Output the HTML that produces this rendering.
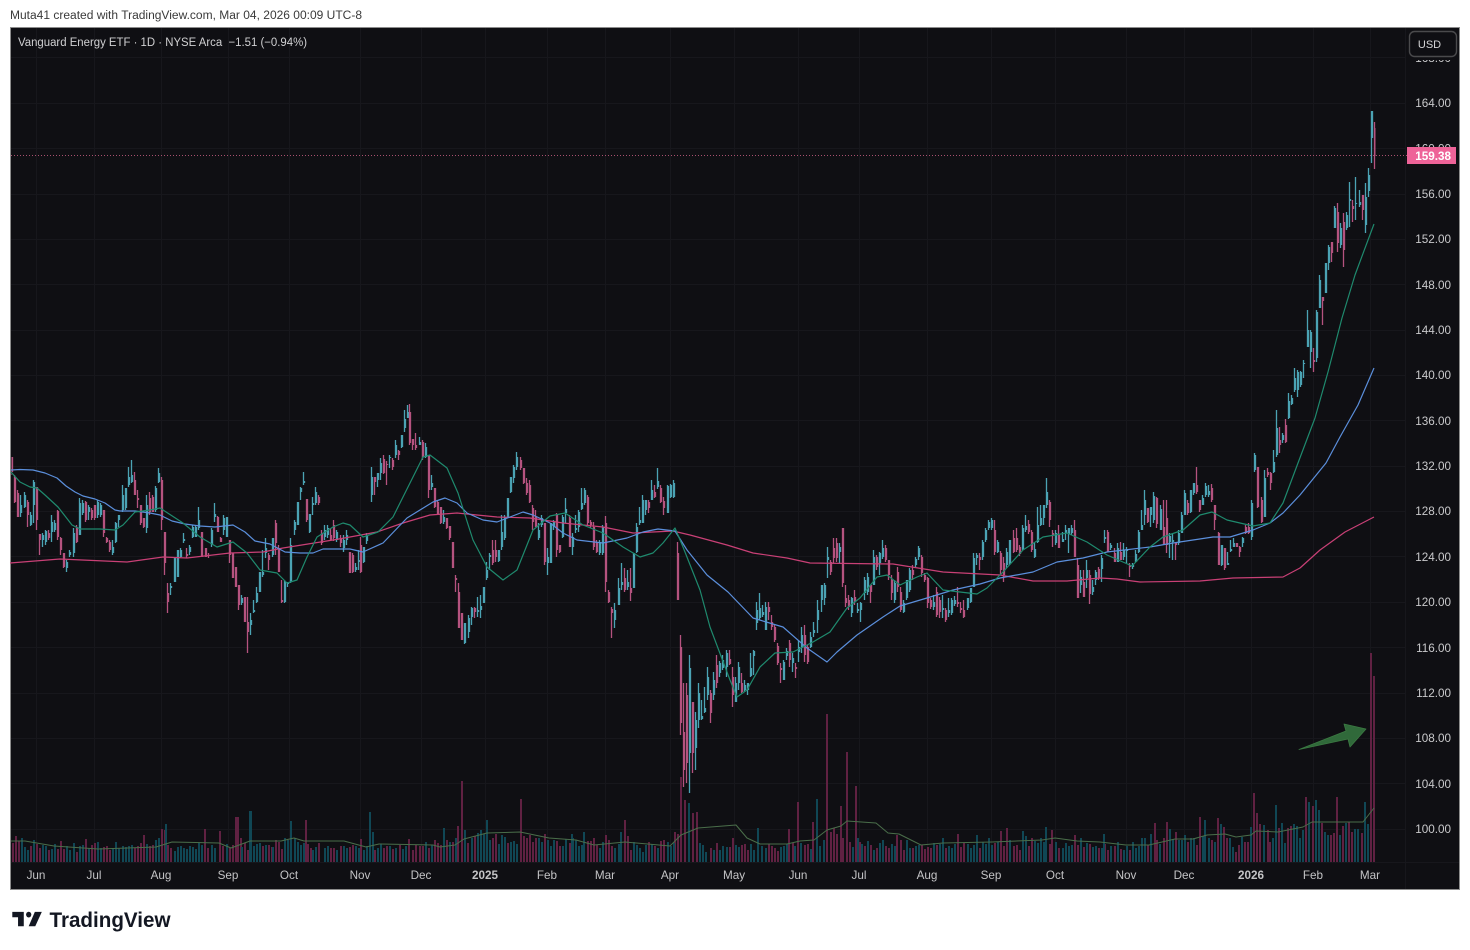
<!DOCTYPE html>
<html><head><meta charset="utf-8"><title>VDE</title>
<style>
html,body{margin:0;padding:0;background:#fff;width:1470px;height:950px;overflow:hidden}
svg{display:block;font-family:"Liberation Sans",sans-serif}
.u{stroke:#4ba3b4;stroke-width:1.3;fill:none}
.d{stroke:#b5527f;stroke-width:1.3;fill:none}
.vt{stroke:#104755;stroke-width:2;fill:none}
.vp{stroke:#602142;stroke-width:2;fill:none}
.p{font-size:11.7px;fill:#c9c9cb;text-anchor:end}
.t{font-size:11.7px;fill:#c4c4c6;text-anchor:middle}
.g{stroke:#17171c;stroke-width:1;fill:none}
.m{fill:none;stroke-width:1.2;stroke-linejoin:round}
</style></head><body>
<svg width="1470" height="950" viewBox="0 0 1470 950" xmlns="http://www.w3.org/2000/svg">
<defs><filter id="s" x="0" y="0" width="1" height="1" filterUnits="objectBoundingBox"><feGaussianBlur stdDeviation=".3"/></filter></defs>
<rect width="1470" height="950" fill="#fff"/>
<text x="10" y="19" font-size="11.5" fill="#3a3a3a" textLength="352" lengthAdjust="spacingAndGlyphs">Muta41 created with TradingView.com, Mar 04, 2026 00:09 UTC-8</text>
<rect x="10.5" y="27.5" width="1449" height="862" fill="#0f0f13" stroke="#8c8c8c"/>
<path class="g" d="M11 57.5H1405M11 103.5H1405M11 148.5H1405M11 194.5H1405M11 239.5H1405M11 284.5H1405M11 330.5H1405M11 375.5H1405M11 420.5H1405M11 466.5H1405M11 511.5H1405M11 556.5H1405M11 602.5H1405M11 647.5H1405M11 693.5H1405M11 738.5H1405M11 783.5H1405M11 829.5H1405"/>
<path class="g" d="M36.5 28V862M94.5 28V862M161.5 28V862M228.5 28V862M289.5 28V862M360.5 28V862M421.5 28V862M485.5 28V862M547.5 28V862M605.5 28V862M670.5 28V862M734.5 28V862M798.5 28V862M859.5 28V862M927.5 28V862M991.5 28V862M1055.5 28V862M1126.5 28V862M1184.5 28V862M1251.5 28V862M1313.5 28V862M1370.5 28V862M1405.5 28V889M11 862.5H1459"/>

<!-- volume -->
<path class="vp" d="M13 843V862M16 836V862M19 841V862M31 846V862M37 844V862M40 848V862M49 850V862M58 849V862M61 841V862M64 849V862M77 852V862M86 839V862M92 845V862M95 843V862M104 847V862M107 846V862M110 850V862M135 848V862M138 846V862M141 843V862M144 835V862M150 846V862M153 845V862M162 829V862M165 830V862M168 845V862M171 848V862M205 829V862M208 848V862M220 831V862M223 846V862M230 848V862M233 845V862M236 817V862M238 817V862M241 838V862M245 843V862M248 850V862M263 846V862M269 845V862M272 847V862M276 840V862M279 842V862M282 849V862M306 820V862M308 844V862M311 848V862M319 843V862M331 848V862M334 848V862M341 846V862M350 847V862M353 845V862M361 839V862M375 850V862M384 848V862M387 846V862M393 849V862M400 845V862M409 839V862M413 850V862M416 845V862M420 846V862M423 846V862M429 848V862M435 840V862M438 843V862M441 845V862M447 840V862M453 842V862M458 826V862M462 781V862M468 843V862M475 836V862M493 838V862M496 834V862M508 843V862M521 799V862M524 836V862M527 838V862M530 835V862M533 842V862M536 838V862M545 834V862M557 841V862M560 846V862M570 843V862M588 841V862M591 841V862M594 838V862M597 845V862M606 835V862M609 840V862M612 846V862M625 820V862M628 836V862M631 850V862M649 842V862M655 846V862M661 841V862M664 840V862M675 832V862M678 834V862M681 777V862M685 800V862M693 813V862M697 812V862"/>
<path class="vp" d="M711 848V862M717 843V862M730 847V862M733 838V862M742 845V862M745 844V862M748 850V862M769 844V862M772 846V862M775 848V862M778 851V862M789 829V862M793 843V862M798 802V862M805 845V862M808 844V862M813 822V862M827 714V862M831 832V862M834 828V862M837 834V862M841 806V862M843 838V862M847 752V862M850 842V862M856 786V862M860 842V862M865 846V862M871 845V862M877 848V862M886 846V862M889 848V862M897 835V862M901 840V862M904 850V862M913 848V862M922 845V862M925 849V862M928 847V862M931 848V862M937 845V862M946 848V862M958 834V862M961 847V862M964 843V862M980 848V862M995 843V862M1001 831V862M1004 846V862M1007 828V862M1014 846V862M1017 845V862M1020 850V862M1029 846V862M1032 838V862M1050 844V862M1052 830V862M1059 848V862M1075 835V862M1078 845V862M1084 847V862M1090 844V862M1099 848V862M1105 844V862M1108 850V862M1115 846V862M1121 849V862M1130 850V862M1148 845V862M1155 823V862M1157 840V862M1164 838V862M1167 822V862M1176 832V862M1188 842V862M1197 845V862M1200 817V862M1212 840V862"/>
<path class="vp" d="M1218 818V862M1224 827V862M1227 838V862M1236 852V862M1239 845V862M1245 842V862M1248 842V862M1254 793V862M1257 813V862M1260 824V862M1268 830V862M1270 842V862M1279 828V862M1291 826V862M1288 828V862M1306 797V862M1313 806V862M1322 823V862M1331 835V862M1334 833V862M1337 797V862M1343 826V862M1349 822V862M1352 832V862M1362 833V862M1371 653V862M1374 676V862"/>
<path class="vt" d="M22 838V862M25 847V862M28 850V862M34 840V862M43 845V862M46 846V862M52 849V862M55 844V862M67 846V862M70 850V862M74 843V862M80 846V862M83 845V862M89 848V862M98 842V862M101 848V862M113 848V862M116 842V862M119 848V862M123 846V862M126 847V862M129 846V862M132 845V862M147 844V862M156 840V862M159 838V862M166 824V862M175 851V862M178 847V862M181 846V862M184 848V862M187 849V862M190 846V862M193 847V862M196 849V862M199 843V862M202 845V862M212 845V862M215 848V862M227 844V862M242 847V862M250 811V862M251 811V862M254 846V862M257 844V862M260 843V862M266 845V862M273 847V862M285 838V862M288 840V862M291 821V862M295 838V862M298 842V862M301 845V862M304 843V862M313 850V862M316 847V862M325 848V862M328 846V862M337 850V862M344 846V862M347 848V862M356 846V862M359 848V862M364 850V862M367 846V862M370 812V862M373 832V862M378 848V862M381 844V862M390 846V862M396 848V862M403 849V862M406 846V862"/>
<path class="vt" d="M426 842V862M432 845V862M444 828V862M450 842V862M456 838V862M465 830V862M472 838V862M478 833V862M481 830V862M484 834V862M487 820V862M490 840V862M499 844V862M502 835V862M505 837V862M511 842V862M514 841V862M517 844V862M539 838V862M542 842V862M548 840V862M551 846V862M554 840V862M563 846V862M566 839V862M572 834V862M573 838V862M576 840V862M579 846V862M582 845V862M584 832V862M600 848V862M603 842V862M615 848V862M619 844V862M621 832V862M634 842V862M637 845V862M640 848V862M643 852V862M646 845V862M652 844V862M658 848V862M668 842V862M671 846V862M674 843V862M689 803V862M700 843V862M703 845V862M706 852V862M714 850V862M720 850V862M723 846V862M727 847V862M736 845V862M739 847V862M751 844V862M754 850V862M758 828V862M762 846V862M766 848V862M781 847V862M784 846V862M787 844V862M795 846V862M801 843V862M811 849V862M817 799V862M820 846V862M824 840V862M853 847V862M858 838V862M862 844V862M868 841V862M874 850V862M880 843V862M883 840V862M892 844V862M895 846V862M907 840V862M910 848V862M916 846V862M919 845V862M934 843V862M940 844V862M943 838V862M949 846V862M952 848V862M955 844V862M968 844V862M971 848V862M974 845V862M977 835V862M983 842V862M986 844V862M989 838V862M992 845V862M998 842V862M1010 840V862M1023 831V862M1026 836V862M1035 841V862M1038 843V862M1041 838V862M1044 842V862M1046 827V862M1056 842V862M1063 848V862M1066 843V862M1069 846V862M1072 845V862M1081 838V862M1087 843V862M1093 847V862M1096 846V862M1102 848V862M1104 834V862M1111 846V862M1118 842V862M1124 850V862M1127 846V862M1133 842V862M1136 848V862M1139 846V862M1142 838V862M1145 838V862M1151 834V862M1160 844V862M1170 829V862M1173 839V862M1179 840V862M1182 840V862M1185 835V862M1191 838V862M1194 838V862M1203 836V862M1205 820V862M1209 838V862M1215 842V862M1221 824V862M1230 838V862M1233 847V862M1242 837V862M1251 827V862M1264 825V862M1273 838V862M1276 805V862M1282 823V862M1285 843V862M1294 824V862M1297 826V862M1300 838V862M1303 830V862M1309 802V862M1316 800V862M1319 810V862M1325 832V862M1328 835V862M1340 835V862M1346 823V862M1355 829V862M1358 829V862M1365 802V862M1368 824V862"/>
<polyline class="m" stroke="#4a6e4a" stroke-width="1" points="11,841 25,841 54,846 98,849 156,847 172,842 219,843 231,848 250,841 281,841 294,838 304,841 344,841 366,847 379,844 433,845 440,847 455,845 464,839 487,833 520,832 525,833 549,838 576,840 594,845 625,842 670,846 681,835 698,828 736,825 747,838 760,844 787,844 800,841 814,840 827,830 841,826 847,821 876,823 888,833 899,834 921,845 943,843 992,842 1042,840 1055,838 1077,841 1100,842 1126,845 1149,845 1175,839 1193,839 1207,835 1225,834 1236,837 1251,835 1256,831 1278,832 1303,827 1312,822 1363,822 1374,808" style="stroke-width:1"/>

<!-- candles -->
<g transform="translate(.5,0)" filter="url(#s)">
<path class="d" d="M11 457V475M12 457V472M14 475V503M15 477V502M17 490V517M18 493V517"/>
<path class="u" d="M20 495V517M21 505V513M24 492V508M25 495V507"/>
<path class="d" d="M27 500V527M28 502V515"/>
<path class="u" d="M30 512V526M31 515V525M33 480V523M34 482V505"/>
<path class="d" d="M36 487V530M37 487V520M39 534V555M40 534V540"/>
<path class="u" d="M42 533V547M43 535V540M45 530V545M46 531V542"/>
<path class="d" d="M48 530V540M49 533V538"/>
<path class="u" d="M51 515V542M52 522V532M54 520V532M55 523V530"/>
<path class="d" d="M57 510V540M58 511V537M60 537V555M61 538V550M63 553V568M64 553V567"/>
<path class="u" d="M66 560V572M67 562V568M69 550V557M70 552V555M73 528V557M74 533V553"/>
<path class="d" d="M76 525V543M77 527V542"/>
<path class="u" d="M79 498V535M80 503V535M82 500V515M83 503V513"/>
<path class="d" d="M85 501V522M86 502V520"/>
<path class="u" d="M88 505V520M89 507V512"/>
<path class="d" d="M91 508V520M92 510V518M94 505V520M95 505V518"/>
<path class="u" d="M97 500V518M98 502V515M100 503V517M101 505V515"/>
<path class="d" d="M103 510V537M104 510V533M106 537V543M107 538V542M109 540V552M110 542V550"/>
<path class="u" d="M112 540V555M113 547V553M115 522V543M116 523V542M118 515V527M119 515V520M122 485V512M123 495V510M125 488V510M126 488V508M128 467V487M129 477V485M131 460V483M132 475V482"/>
<path class="d" d="M134 472V495M135 480V495M137 490V508M138 498V500M140 505V525M141 505V523M143 518V528M144 518V527"/>
<path class="u" d="M146 495V533M147 505V528"/>
<path class="d" d="M149 492V515M150 498V512M152 495V512M153 497V512"/>
<path class="u" d="M155 486V512M156 488V510M158 468V483M159 473V482"/>
<path class="d" d="M161 477V530M162 480V520M164 532V575M165 532V563M167 583V613M168 593V602"/>
<path class="u" d="M170 583V595M171 586V588M174 557V582M175 558V582M177 550V577M178 550V577M180 548V558M181 550V557M183 533V543M184 539V541"/>
<path class="d" d="M186 548V558M187 554V556"/>
<path class="u" d="M189 545V555M190 547V552M192 525V538M193 527V537M195 525V537M196 527V537M198 507V530M199 520V528"/>
<path class="d" d="M201 532V557M202 532V557M205 548V557M206 548V557M208 553V558M209 555V556"/>
<path class="u" d="M211 528V547M212 530V545M214 503V522M215 514V517"/>
<path class="d" d="M217 516V532M218 517V532M220 537V542M221 538V542"/>
<path class="u" d="M223 515V535M224 518V530M226 517V537M227 517V537"/>
<path class="d" d="M229 540V563M230 540V555M232 553V578M233 553V578M235 567V587M236 567V587M238 585V610M239 585V605"/>
<path class="u" d="M241 595V605M242 598V603"/>
<path class="d" d="M244 597V622M245 597V622M247 597V653M248 622V632"/>
<path class="u" d="M250 613V635M251 620V625M253 600V613M254 610V612M256 587V603M257 593V602M259 572V592M260 572V592M262 550V577M263 572V575M265 538V558M266 548V553"/>
<path class="d" d="M268 553V570M269 555V560"/>
<path class="u" d="M272 538V557M273 538V555"/>
<path class="d" d="M275 520V555M276 523V543M278 545V572M279 548V572M281 580V603M282 600V602"/>
<path class="u" d="M284 580V603M285 582V602M287 582V587M288 582V584M290 538V583M291 545V582M294 520V535M295 522V530M297 502V525M298 502V525M300 487V500M301 488V492M303 472V485M304 481V483"/>
<path class="d" d="M306 499V522M307 499V520"/>
<path class="u" d="M309 514V533M310 514V532M312 497V515M313 503V505M315 487V505M316 492V503"/>
<path class="d" d="M318 495V505M319 497V503M321 530V545M322 533V543"/>
<path class="u" d="M324 525V540M325 530V537M327 525V538M328 528V535"/>
<path class="d" d="M330 528V540M331 535V540M333 520V541M334 525V538"/>
<path class="u" d="M336 530V542M337 532V540"/>
<path class="d" d="M340 535V547M341 538V543"/>
<path class="u" d="M343 535V552M344 540V548M346 530V545M347 535V540"/>
<path class="d" d="M349 552V573M350 552V573M352 553V573M353 555V572"/>
<path class="u" d="M355 563V572M356 567V570M358 550V570M359 560V562"/>
<path class="d" d="M360 537V573M361 545V572"/>
<path class="u" d="M363 547V563M364 547V562M366 533V544M367 535V541M371 467V502M372 477V495"/>
<path class="d" d="M374 477V495M375 477V482"/>
<path class="u" d="M377 473V487M378 473V480M380 458V480M381 463V473"/>
<path class="d" d="M383 455V474M384 459V473M386 461V485M387 464V465"/>
<path class="u" d="M389 455V468M390 457V458"/>
<path class="d" d="M392 458V470M393 460V467"/>
<path class="u" d="M395 440V458M396 445V455"/>
<path class="d" d="M398 450V460M399 451V455"/>
<path class="u" d="M401 435V448M402 435V447M404 410V432M405 419V428M407 405V418M408 412V418"/>
<path class="d" d="M409 404V445M410 412V443M412 439V450M413 439V445M415 433V450M416 445V448"/>
<path class="u" d="M419 437V445M420 442V445"/>
<path class="d" d="M422 440V460M423 442V457"/>
<path class="u" d="M425 443V458M426 447V457"/>
<path class="d" d="M428 455V498M429 455V490"/>
<path class="u" d="M431 475V490M432 483V487"/>
<path class="d" d="M434 488V508M435 488V507M437 500V515M438 502V515M440 507V524M441 507V523"/>
<path class="u" d="M443 510V524M444 517V522"/>
<path class="d" d="M446 518V529M447 518V528M449 526V540M450 526V538M452 542V568M453 542V568M455 575V592M456 578V580M458 583V628M459 592V628M461 613V640M462 613V640"/>
<path class="u" d="M464 623V644M465 623V643M468 615V638M469 618V632M471 607V625M472 608V617"/>
<path class="d" d="M474 607V618M475 608V612"/>
<path class="u" d="M477 597V617M478 610V612M480 595V618M481 606V610M483 587V603M484 587V603M486 562V580M487 570V578M489 553V570M490 555V557"/>
<path class="d" d="M492 540V565M493 550V563M495 540V562M496 550V557"/>
<path class="u" d="M498 550V562M499 550V561M501 515V550M502 532V547M504 515V540M505 517V538M507 498V518M508 498V518M510 477V493M511 477V492M513 465V483M514 467V478M516 452V470M517 457V467"/>
<path class="d" d="M520 457V470M521 460V468M523 468V484M524 468V483M526 478V495M527 483V493M529 480V503M530 485V502M532 505V530M533 508V522M535 510V527M536 517V527"/>
<path class="u" d="M538 523V540M539 530V538M541 515V527M542 518V525"/>
<path class="d" d="M544 523V565M545 523V562"/>
<path class="u" d="M547 548V575M548 557V563M550 523V563M551 523V563M553 520V530M554 522V527"/>
<path class="d" d="M556 513V557M557 514V550M559 545V553M560 545V552"/>
<path class="u" d="M562 515V538M563 517V537M565 498V523M566 509V513"/>
<path class="d" d="M569 515V547M570 518V547"/>
<path class="u" d="M572 533V555M573 537V547M575 515V533M576 528V530M578 510V532M579 512V527M581 488V510M582 503V509M584 488V505M585 490V503"/>
<path class="d" d="M587 495V525M588 497V523M590 520V528M591 522V525M593 522V550M594 527V547M596 540V553M597 542V552"/>
<path class="u" d="M599 540V555M600 542V553M602 525V555M603 527V553"/>
<path class="d" d="M605 516V592M606 523V582M608 590V603M609 592V602M611 607V638M612 609V613"/>
<path class="u" d="M614 603V628M615 610V620M618 578V605M619 588V605M621 563V590M622 582V585"/>
<path class="d" d="M624 568V592M625 578V590"/>
<path class="u" d="M627 570V590M628 582V587"/>
<path class="d" d="M630 568V601M631 588V593"/>
<path class="u" d="M633 553V588M634 553V588M636 523V553M637 527V552M639 507V525M640 520V523M642 495V523M643 500V523M645 500V515M646 500V510"/>
<path class="d" d="M648 500V513M649 502V508"/>
<path class="u" d="M651 480V500M652 490V500"/>
<path class="d" d="M654 485V498M655 492V497"/>
<path class="u" d="M657 468V489M658 481V487"/>
<path class="d" d="M660 485V503M661 488V502M663 497V515M664 501V508"/>
<path class="u" d="M667 485V513M668 486V513M670 484V498M671 485V497M673 480V498M674 483V497"/>
<path class="d" d="M677 542V600M678 553V600M680 635V735M681 647V723M683 683V787M684 732V770M686 683V783M687 695V763"/>
<path class="u" d="M689 655V793M690 668V753"/>
<path class="d" d="M692 702V773M693 702V753"/>
<path class="u" d="M695 712V770M696 720V748M698 683V728M699 693V720M701 700V720M702 716V719M704 687V713M705 708V712M707 667V700M708 677V695"/>
<path class="d" d="M710 690V723M711 693V713"/>
<path class="u" d="M713 672V700M714 680V695"/>
<path class="d" d="M716 655V688M717 665V683"/>
<path class="u" d="M719 661V677M720 663V673M722 655V670M723 660V668M726 650V677M727 653V667"/>
<path class="d" d="M729 650V665M730 659V664M732 667V707M733 677V695"/>
<path class="u" d="M735 677V702M736 683V702M738 662V690M739 667V683"/>
<path class="d" d="M741 673V693M742 683V692"/>
<path class="u" d="M744 680V692M745 685V690M747 683V695M748 683V690M750 653V677M751 668V676M753 650V675M754 651V656M756 602V630M757 610V623M759 593V620M760 608V618M762 605V617M763 612V615M765 602V630M766 607V630"/>
<path class="d" d="M768 602V620M769 607V612M771 615V630M772 622V627M774 625V642M775 627V640M777 643V665M778 646V663M780 663V683M781 668V670"/>
<path class="u" d="M783 660V680M784 662V680M786 648V660M787 651V656"/>
<path class="d" d="M789 640V667M790 643V660"/>
<path class="u" d="M792 653V672M793 658V663"/>
<path class="d" d="M795 663V678M796 667V669"/>
<path class="u" d="M798 640V662M799 647V652M801 627V653M802 635V648"/>
<path class="d" d="M804 625V662M805 635V655M807 645V664M808 647V662"/>
<path class="u" d="M810 632V648M811 637V647M813 622V637M814 630V633M817 600V633M818 610V620M821 585V612M822 585V600M824 583V605M825 585V598M827 547V578M828 557V560"/>
<path class="d" d="M830 560V575M831 562V572M833 538V563M834 548V558M836 538V562M837 543V558"/>
<path class="u" d="M839 543V563M840 547V552"/>
<path class="d" d="M842 528V587M843 528V583M845 585V607M846 598V603M848 595V610M849 600V607"/>
<path class="u" d="M851 597V617M852 598V613"/>
<path class="d" d="M854 590V605M855 597V602"/>
<path class="u" d="M857 603V613M858 609V611M860 602V622M861 603V610M864 577V600M865 580V593M867 573V595M868 577V592"/>
<path class="d" d="M870 585V603M871 585V592"/>
<path class="u" d="M873 550V585M874 557V585"/>
<path class="d" d="M876 555V570M877 557V567"/>
<path class="u" d="M879 552V575M880 553V563M882 540V559M883 548V557"/>
<path class="d" d="M885 545V562M886 548V560M888 560V580M889 560V575M891 575V600M892 580V593"/>
<path class="u" d="M894 580V603M895 583V600"/>
<path class="d" d="M897 567V592M898 572V587M900 587V612M901 592V610"/>
<path class="u" d="M903 600V613M904 603V612M906 580V600M907 580V598M909 568V592M910 570V590"/>
<path class="d" d="M912 565V580M913 570V575"/>
<path class="u" d="M915 557V567M916 559V565M918 546V560M919 548V557"/>
<path class="d" d="M921 555V577M922 557V573M924 573V582M925 575V580M927 577V608M928 578V603M930 598V609M931 600V607"/>
<path class="u" d="M933 595V610M934 602V607"/>
<path class="d" d="M936 587V617M937 592V615M939 597V618M940 600V612"/>
<path class="u" d="M942 595V618M943 608V610"/>
<path class="d" d="M945 608V622M946 610V620"/>
<path class="u" d="M948 598V617M949 610V613M951 598V615M952 600V613M954 596V606M955 600V604"/>
<path class="d" d="M957 587V607M958 602V604M960 602V613M961 608V610M963 600V618M964 610V617"/>
<path class="u" d="M967 598V610M968 598V608M970 588V603M971 588V602M973 553V587M974 558V587M976 553V565M977 555V558"/>
<path class="d" d="M979 553V570M980 557V560"/>
<path class="u" d="M982 540V560M983 542V557M985 528V542M986 530V540M988 520V530M989 522V528M991 518V530M992 520V528"/>
<path class="d" d="M994 520V555M995 530V552"/>
<path class="u" d="M997 540V553M998 542V552"/>
<path class="d" d="M1000 551V575M1001 553V570M1003 557V582M1004 563V575"/>
<path class="u" d="M1006 548V568M1007 552V565M1009 540V565M1010 540V563"/>
<path class="d" d="M1013 530V553M1014 538V552M1016 528V552M1017 538V550M1019 545V556M1020 547V554"/>
<path class="u" d="M1022 525V550M1023 528V550M1025 515V532M1026 526V530"/>
<path class="d" d="M1028 520V534M1029 524V532M1031 530V552M1032 532V550"/>
<path class="u" d="M1034 543V558M1035 549V557M1037 507V543M1038 525V542M1040 505V526M1041 518V525M1043 505V525M1044 505V518M1046 478V508M1047 492V505"/>
<path class="d" d="M1049 500V527M1050 502V520M1052 530V547M1053 533V535"/>
<path class="u" d="M1055 530V545M1056 533V543"/>
<path class="d" d="M1058 525V548M1059 535V548"/>
<path class="u" d="M1062 532V542M1063 539V542M1065 525V540M1066 530V533M1068 528V553M1069 528V534M1071 525V535M1072 528V533"/>
<path class="d" d="M1074 520V557M1075 530V557M1077 558V598M1078 565V598"/>
<path class="u" d="M1080 570V593M1081 577V585"/>
<path class="d" d="M1083 570V597M1084 582V597"/>
<path class="u" d="M1086 560V588M1087 570V578"/>
<path class="d" d="M1089 570V604M1090 575V594"/>
<path class="u" d="M1092 580V595M1093 587V592M1095 570V585M1096 572V580"/>
<path class="d" d="M1098 567V580M1099 569V578"/>
<path class="u" d="M1101 555V582M1102 558V569M1104 530V543M1105 537V539"/>
<path class="d" d="M1107 530V552M1108 532V552"/>
<path class="u" d="M1110 543V550M1111 545V548"/>
<path class="d" d="M1114 548V562M1115 553V562"/>
<path class="u" d="M1117 543V562M1118 548V562"/>
<path class="d" d="M1120 542V560M1121 552V560"/>
<path class="u" d="M1123 543V560M1124 550V557M1126 547V563M1127 549V551"/>
<path class="d" d="M1129 563V577M1130 565V567"/>
<path class="u" d="M1132 563V569M1133 565V567M1135 550V562M1136 554V562M1138 530V553M1139 532V552M1141 510V530M1142 525V530M1144 490V525M1145 500V515"/>
<path class="d" d="M1147 508V523M1148 508V522"/>
<path class="u" d="M1150 507V527M1151 507V515M1153 492V523M1154 496V520"/>
<path class="d" d="M1156 497V528M1157 498V524"/>
<path class="u" d="M1160 505V530M1161 509V530"/>
<path class="d" d="M1163 500V545M1164 527V545M1166 500V553M1167 518V545"/>
<path class="u" d="M1169 533V558M1170 536V542M1172 533V560M1173 540V542"/>
<path class="d" d="M1175 543V560M1176 543V545"/>
<path class="u" d="M1178 530V545M1179 533V543M1181 512V533M1182 515V533M1184 490V515M1185 493V515"/>
<path class="d" d="M1187 500V515M1188 503V513"/>
<path class="u" d="M1190 490V513M1191 490V512M1193 483V495M1194 483V493"/>
<path class="d" d="M1196 467V494M1197 485V492M1199 500V512M1200 500V510"/>
<path class="u" d="M1202 495V505M1203 498V505M1205 483V497M1206 486V495M1208 485V497M1209 491V495"/>
<path class="d" d="M1211 484V502M1212 488V500M1214 505V530M1215 505V520M1218 532V565M1219 533V565"/>
<path class="u" d="M1221 545V566M1222 545V565"/>
<path class="d" d="M1224 548V570M1225 548V568"/>
<path class="u" d="M1227 552V565M1228 563V565M1230 540V552M1231 549V551M1233 538V547M1234 543V547"/>
<path class="d" d="M1236 543V547M1237 543V547M1239 546V557M1240 547V552"/>
<path class="u" d="M1242 537V547M1243 538V543"/>
<path class="d" d="M1245 525V534M1246 527V533M1248 523V534M1249 527V533"/>
<path class="u" d="M1251 500V540M1252 503V537M1254 453V472M1255 455V470"/>
<path class="d" d="M1257 467V508M1258 467V507M1261 497V523M1262 500V522"/>
<path class="u" d="M1264 470V517M1265 478V517"/>
<path class="d" d="M1267 468V477M1268 472V475M1270 472V490M1271 473V483"/>
<path class="u" d="M1273 450V473M1274 462V472M1276 410V457M1277 428V455"/>
<path class="d" d="M1279 427V453M1280 440V445"/>
<path class="u" d="M1282 433V443M1283 435V440"/>
<path class="d" d="M1285 419V443M1286 425V442"/>
<path class="u" d="M1288 393V419M1289 401V418M1291 395V405M1292 398V404M1294 368V392M1295 378V390M1297 370V397M1298 372V390M1300 371V387M1301 372V385M1303 360V378M1304 363V364M1307 310V347M1308 330V347M1310 330V368M1311 332V352"/>
<path class="d" d="M1313 348V372M1314 360V362"/>
<path class="u" d="M1316 310V362M1317 312V358M1319 275V308M1320 280V308"/>
<path class="d" d="M1322 297V325M1323 297V301"/>
<path class="u" d="M1325 263V293M1326 263V293M1328 245V270M1329 247V263"/>
<path class="d" d="M1331 242V262M1332 242V253"/>
<path class="u" d="M1334 206V228M1335 208V228"/>
<path class="d" d="M1337 203V252M1338 212V243"/>
<path class="u" d="M1340 223V248M1341 228V245"/>
<path class="d" d="M1343 213V267M1344 222V250"/>
<path class="u" d="M1346 212V230M1347 215V228M1349 182V227M1350 199V201"/>
<path class="d" d="M1352 200V222M1353 206V209"/>
<path class="u" d="M1355 177V220M1356 203V204M1359 190V207M1360 202V205"/>
<path class="d" d="M1362 195V220M1363 195V210"/>
<path class="u" d="M1365 183V233M1366 197V225M1368 168V197M1369 175V191M1371 111V163M1372 111V138"/>
<path class="d" d="M1374 122V169M1375 128V156"/>
</g>

<!-- moving averages -->
<polyline class="m" stroke="#c94076" points="10,563 60,559 127,562 163,557 187,558 230,553 263,552 283,548 333,540 350,537 377,532 403,523 430,515 457,513 497,517 530,518 563,523 603,527 633,533 673,531 690,535 727,545 753,553 787,558 810,563 893,564 943,572 1000,575 1033,581 1067,581 1100,578 1117,579 1140,582 1200,581 1233,578 1283,577 1300,568 1320,550 1345,532 1374,517"/>
<polyline class="m" stroke="#5b8fdc" points="11,470 20,469.5 33,470 45,473 57,478 66,486 75,492 83,496 95,499 105,503 115,510 120,511 135,511 150,513 160,515 172,521 185,524 200,526 215,527 233,525 245,532 255,541 270,544 285,552 300,553 313,553 323,549 335,549 350,549 363,552 383,543 407,518 433,502 445,498 457,503 467,513 483,520 497,522 510,517 523,512 533,515 550,523 563,533 577,540 603,543 627,538 643,532 658,529 675,531 687,550 707,575 728,592 753,618 783,627 807,648 827,662 837,652 857,635 883,617 900,606 927,598 953,590 980,584 1000,578 1033,572 1057,562 1083,558 1107,552 1150,547 1173,543 1213,537 1230,537 1253,530 1270,523 1283,513 1300,495 1326,463 1340,437 1358,405 1374,368"/>
<polyline class="m" stroke="#1f8a6e" points="11,472 20,482 30,487 37,488 45,495 58,507 72,525 80,529 100,529 115,530 123,525 135,512 150,510 160,508 183,523 200,537 217,547 233,542 247,553 260,570 277,573 287,583 297,580 307,557 317,537 333,527 343,523 350,525 363,537 378,532 393,517 410,483 423,457 430,455 447,468 458,493 473,540 487,567 503,580 517,570 533,530 550,516 565,513 583,525 603,533 623,547 640,557 653,553 663,543 675,528 683,547 700,590 710,627 730,680 737,697 747,690 760,667 775,653 793,652 813,642 830,632 847,608 860,598 877,577 887,575 900,585 917,577 927,573 943,590 977,594 987,588 1003,572 1023,550 1043,537 1067,533 1087,542 1107,555 1132,566 1150,547 1163,537 1183,530 1200,515 1212,512 1227,520 1253,526 1270,523 1283,503 1298,463 1315,418 1328,372 1342,318 1355,275 1374,224"/>

<!-- last price line -->
<path d="M11 155.5H1407" stroke="#a8506f" stroke-width="1" stroke-dasharray="1 2" fill="none"/>

<!-- arrow -->
<polygon points="1299,749.5 1346,731 1344,724 1366,729 1350,747 1348,739" fill="#30693a" stroke="#3b7a42" stroke-width=".8" stroke-linejoin="round"/>

<!-- price axis -->
<text class="p" x="1451" y="62">168.00</text>
<rect x="1406" y="28" width="53" height="32" fill="#0f0f13"/>
<text class="p" x="1451" y="107">164.00</text>
<text class="p" x="1451" y="152.5">160.00</text>
<text class="p" x="1451" y="198">156.00</text>
<text class="p" x="1451" y="243">152.00</text>
<text class="p" x="1451" y="289">148.00</text>
<text class="p" x="1451" y="334">144.00</text>
<text class="p" x="1451" y="379">140.00</text>
<text class="p" x="1451" y="425">136.00</text>
<text class="p" x="1451" y="470">132.00</text>
<text class="p" x="1451" y="515">128.00</text>
<text class="p" x="1451" y="561">124.00</text>
<text class="p" x="1451" y="606">120.00</text>
<text class="p" x="1451" y="652">116.00</text>
<text class="p" x="1451" y="697">112.00</text>
<text class="p" x="1451" y="742">108.00</text>
<text class="p" x="1451" y="788">104.00</text>
<text class="p" x="1451" y="833">100.00</text>
<rect x="1407" y="147" width="49" height="17" fill="#ee6398"/>
<text x="1451" y="160" font-size="11.7" fill="#fff" text-anchor="end" font-weight="bold">159.38</text>
<rect x="1409.5" y="31.5" width="47" height="25" rx="5" fill="#0f0f13" stroke="#4a4a4c" stroke-width="1.4"/>
<text x="1429.5" y="48" font-size="11" fill="#d6d6d8" text-anchor="middle">USD</text>

<!-- legend -->
<text x="18" y="46" font-size="11.5" fill="#d0d0d2" textLength="289" lengthAdjust="spacingAndGlyphs" xml:space="preserve">Vanguard Energy ETF · 1D · NYSE Arca  −1.51 (−0.94%)</text>

<!-- time axis -->
<g>
<text class="t" x="36" y="879">Jun</text>
<text class="t" x="94" y="879">Jul</text>
<text class="t" x="161" y="879">Aug</text>
<text class="t" x="228" y="879">Sep</text>
<text class="t" x="289" y="879">Oct</text>
<text class="t" x="360" y="879">Nov</text>
<text class="t" x="421" y="879">Dec</text>
<text class="t" x="485" y="879" font-weight="bold">2025</text>
<text class="t" x="547" y="879">Feb</text>
<text class="t" x="605" y="879">Mar</text>
<text class="t" x="670" y="879">Apr</text>
<text class="t" x="734" y="879">May</text>
<text class="t" x="798" y="879">Jun</text>
<text class="t" x="859" y="879">Jul</text>
<text class="t" x="927" y="879">Aug</text>
<text class="t" x="991" y="879">Sep</text>
<text class="t" x="1055" y="879">Oct</text>
<text class="t" x="1126" y="879">Nov</text>
<text class="t" x="1184" y="879">Dec</text>
<text class="t" x="1251" y="879" font-weight="bold">2026</text>
<text class="t" x="1313" y="879">Feb</text>
<text class="t" x="1370" y="879">Mar</text>
</g>

<!-- logo -->
<g transform="translate(12.3,906.5) scale(.82,.9)" fill="#131722">
<path d="M14 6H0v6h7v10h7V6Z"/><circle cx="20" cy="9" r="3.2"/><path d="M28 22H20l7.5-16H36L28 22Z"/>
</g>
<text x="49.5" y="927" font-size="21" font-weight="bold" fill="#131722" textLength="121" lengthAdjust="spacingAndGlyphs">TradingView</text>
</svg>
</body></html>
